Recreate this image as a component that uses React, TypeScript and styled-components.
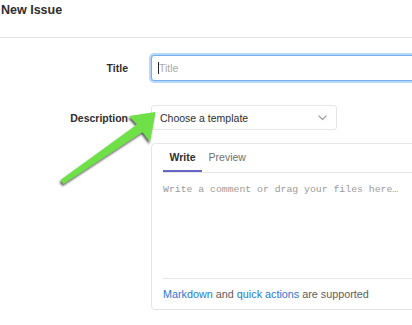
import styled, { createGlobalStyle } from "styled-components"

const GlobalStyle = createGlobalStyle`
   html, body {
      margin: 0;
      padding: 0;
      background: #fff;
      overflow: hidden;
   }
   body {
      font-family: "Liberation Sans", Arial, sans-serif;
      color: #2e2e2e;
   }
`

const ChevronDown = () => (
   <svg width="9" height="6" viewBox="0 0 9 6" fill="none">
      <path d="M1 1l3.5 3.5L8 1" stroke="#a0a0a0" strokeWidth="1.2" strokeLinecap="round" strokeLinejoin="round" />
   </svg>
)

const PointerArrow = () => (
   <ArrowLayer width="412" height="325" viewBox="0 0 412 325">
      <defs>
         <filter id="arrowShadow" x="-20%" y="-20%" width="140%" height="140%">
            <feDropShadow dx="-1" dy="2" stdDeviation="1.3" floodColor="#1a1a1a" floodOpacity="0.75" />
         </filter>
      </defs>
      <polygon
         points="60.5,180 137,124.5 129,116 155.5,112 150,142 142.5,132 63.5,184"
         fill="#70e04a"
         filter="url(#arrowShadow)"
      />
   </ArrowLayer>
)

export default function App() {
   return (
      <>
         <GlobalStyle />
         <Page>
            <PageTitle>New Issue</PageTitle>
            <Form>
               <Row>
                  <Label>Title</Label>
                  <Field>
                     <InputWrap>
                        <TitleInput placeholder="Title" />
                        <Caret />
                     </InputWrap>
                  </Field>
               </Row>
               <Row spacing={24}>
                  <Label>Description</Label>
                  <Field>
                     <TemplateSelect>
                        <span>Choose a template</span>
                        <ChevronDown />
                     </TemplateSelect>
                     <Editor>
                        <Tabs>
                           <Tab active>Write</Tab>
                           <Tab>Preview</Tab>
                        </Tabs>
                        <CommentArea placeholder="Write a comment or drag your files here…" />
                        <EditorFooter>
                           <Link>Markdown</Link> and <Link>quick actions</Link> are supported
                        </EditorFooter>
                     </Editor>
                  </Field>
               </Row>
            </Form>
            <PointerArrow />
         </Page>
      </>
   )
}

// Styled Components

const Page = styled.div`
   position: relative;
   width: 412px;
   height: 325px;
   overflow: hidden;
`

const PageTitle = styled.h3`
   margin: 0;
   padding: 0 0 0 1px;
   height: 37px;
   line-height: 21px;
   font-size: 12.5px;
   font-weight: bold;
   color: #2e2e2e;
   border-bottom: 1px solid #e5e5e5;
`

const Form = styled.div`
   padding-top: 17px;
`

const Row = styled.div<{ spacing?: number }>`
   display: grid;
   grid-template-columns: 128px 320px;
   column-gap: 23px;
   align-items: start;
   margin-top: ${({ spacing }) => spacing ?? 0}px;
`

const Label = styled.label`
   text-align: right;
   font-size: 10.5px;
   font-weight: bold;
   line-height: 26px;
   color: #2e2e2e;
`

const Field = styled.div`
   display: flex;
   flex-direction: column;
`

const InputWrap = styled.div`
   position: relative;
`

const TitleInput = styled.input`
   box-sizing: border-box;
   width: 100%;
   height: 26px;
   padding: 0 7px;
   font-family: "Liberation Sans", Arial, sans-serif;
   font-size: 10.5px;
   color: #2e2e2e;
   border: 1px solid #73afea;
   border-radius: 3px;
   box-shadow: 0 0 0 2px #b9d7f8;
   outline: none;
   &::placeholder {
      color: #ababab;
   }
`

const Caret = styled.span`
   position: absolute;
   left: 7px;
   top: 7px;
   width: 1px;
   height: 12px;
   background: #222;
`

const TemplateSelect = styled.div`
   box-sizing: border-box;
   display: flex;
   align-items: center;
   justify-content: space-between;
   width: 186px;
   height: 25px;
   padding: 0 9px 0 8px;
   font-size: 10.5px;
   color: #2e2e2e;
   border: 1px solid #e5e5e5;
   border-radius: 3px;
   background: #fff;
`

const Editor = styled.div`
   box-sizing: border-box;
   display: flex;
   flex-direction: column;
   height: 167px;
   margin-top: 13px;
   border: 1px solid #e5e5e5;
   border-radius: 4px;
`

const Tabs = styled.div`
   display: flex;
   margin: 0 11px;
   border-bottom: 1px solid #e5e5e5;
`

const Tab = styled.div<{ active?: boolean }>`
   padding: 0 6.5px;
   height: 28px;
   line-height: 27px;
   font-size: 10.5px;
   font-weight: ${({ active }) => (active ? "bold" : "normal")};
   color: ${({ active }) => (active ? "#2e2e2e" : "#707070")};
   box-shadow: ${({ active }) => (active ? "inset 0 -2px 0 #6666c4" : "none")};
`

const CommentArea = styled.textarea`
   flex: 1;
   border: none;
   outline: none;
   resize: none;
   padding: 10px 11px 7px;
   font-family: "Liberation Mono", "DejaVu Sans Mono", monospace;
   font-size: 9.8px;
   line-height: 14px;
   &::placeholder {
      color: #9a9a9a;
   }
`

const EditorFooter = styled.div`
   margin: 0 11px;
   padding: 8px 0 7px;
   border-top: 1px solid #e5e5e5;
   font-size: 10.8px;
   line-height: 15px;
   color: #5c5c5c;
`

const Link = styled.a`
   color: #1f78d1;
   text-decoration: none;
`

const ArrowLayer = styled.svg`
   position: absolute;
   top: 0;
   left: 0;
   pointer-events: none;
`
